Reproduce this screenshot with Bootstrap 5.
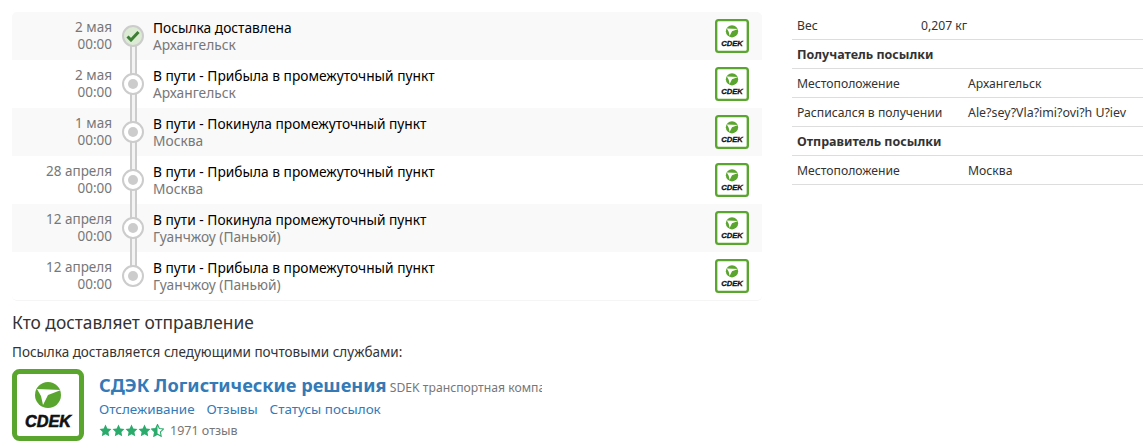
<!DOCTYPE html>
<html lang="ru"><head><meta charset="utf-8"><title>Трекинг</title>
<link href="https://cdn.jsdelivr.net/npm/bootstrap@5.3.0/dist/css/bootstrap.min.css" rel="stylesheet">
<style>
html,body{height:447px;overflow:hidden}
body{font-family:"Noto Sans","DejaVu Sans",sans-serif;font-size:12.5px;color:#333;background:#fff}
.page-wrap{padding:12px 0 0 12px;width:1143px}
.timeline{width:750px;border-radius:5px;overflow:hidden;flex:none;border-bottom:1px solid #f5f5f5}
.ev-row{height:48px;position:relative}
.ev-row:nth-child(odd){background:#f9f9f9}
.ev-date{width:100px;text-align:right;font-size:13.500px;line-height:17px;color:#777;padding-top:7px;flex:none}
.ev-mark{width:41px;flex:none;position:relative}
.ev-line{position:absolute;left:17.500px;top:0;bottom:0;width:7px;background:#f4f4f4;border-left:2px solid #ccc;border-right:2px solid #ccc}
.ev-row:first-child .ev-line{top:24px}
.ev-row:last-child .ev-line{bottom:24px}
.ev-dot{position:absolute;left:10px;top:13px;width:22px;height:22px;border-radius:50%;border:2px solid #ccc;background:#fff;display:flex;align-items:center;justify-content:center}
.ev-dot i{display:block;width:10px;height:10px;border-radius:50%;background:#ccc}
.ev-dot.done{background:#dcebd3}
.ev-text{flex:1;line-height:17px;padding-top:7px;font-size:13.750px}
.ev-title{color:#000}
.ev-place{color:#777}
.ev-logo{width:34px;height:34px;margin:7px 13px 0 0;flex:none}
.side{margin-left:30px;width:351px;flex:none}
.side-row{height:29px;border-bottom:1px solid #ddd;display:flex;align-items:center;padding:2px 0 0 5px;font-size:12.200px;color:#333}
.side-row:first-child{height:28px;padding-top:1px}
.side-k{width:171px;flex:none}
.side-k.short{width:124px}
.side-h{font-weight:700;font-size:12.500px}
.side-latin{font-size:12.400px}
.who{font-size:17.350px;line-height:20px;margin:11px 0 0;font-weight:400}
.who-p{font-size:13.500px;line-height:16px;margin:12px 0 0}
.svc{margin-top:9px}
.svc-logo{width:72px;height:72px;flex:none}
.svc-body{margin-left:15px;width:443px;white-space:nowrap;overflow:hidden;padding-top:5px}
.svc-title{font-size:18.200px;font-weight:700;color:#337ab7;line-height:22px;text-decoration:none}
.svc-desc{font-size:12.200px;color:#777}
.svc-links{font-size:13.450px;line-height:20px;margin-top:1px;gap:12px}
.svc-links a{color:#337ab7;text-decoration:none}
.svc-rate{font-size:12.500px;color:#777;margin-top:3px;line-height:18px}
.stars{width:65px;height:13px;margin-right:6px}
.logo-txt{font-family:"Liberation Sans",sans-serif;font-weight:700;font-style:italic}
</style></head><body>
<svg width="0" height="0" class="position-absolute"><defs>
<clipPath id="half"><rect x="0" y="0" width="12" height="24"/></clipPath>
<symbol id="cdek" viewBox="0 0 72 72">
<rect x="2.500" y="2.500" width="67" height="67" rx="5" fill="#fff" stroke="#5aa52e" stroke-width="5"/>
<circle cx="36" cy="26" r="13" fill="#5aa52e"/>
<path d="M25 20 L49 21 L36 26 L31 36 L29 27 Z" fill="#fff"/>
<text x="36" y="58" text-anchor="middle" class="logo-txt" font-size="17" textLength="46" lengthAdjust="spacingAndGlyphs" fill="#111" stroke="#111" stroke-width=".6">CDEK</text>
</symbol>
<symbol id="star" viewBox="0 0 24 24"><path d="M12 1l3.400 7.300 7.600 1-5.600 5.400 1.400 8L12 18.800l-6.800 3.900 1.400-8L1 9.300l7.600-1z"/></symbol>
<symbol id="star-half" viewBox="0 0 24 24"><path d="M12 1l3.400 7.300 7.600 1-5.600 5.400 1.400 8L12 18.800l-6.800 3.900 1.400-8L1 9.300l7.600-1z" fill="none" stroke="#2bab6b" stroke-width="2"/><path clip-path="url(#half)" d="M12 1l3.400 7.300 7.600 1-5.600 5.400 1.400 8L12 18.800l-6.800 3.900 1.400-8L1 9.300l7.600-1z" fill="#2bab6b"/></symbol>
</defs></svg>
<div class="page-wrap">
<div class="d-flex align-items-start">
<div class="timeline">
<div class="ev-row d-flex"><div class="ev-date">2 мая<br>00:00</div><div class="ev-mark"><div class="ev-line"></div><div class="ev-dot done"><svg width="14" height="12" viewBox="0 0 14 12"><path d="M1.500 6.500l3.500 3.500 7.500-8" fill="none" stroke="#3d7f35" stroke-width="3"/></svg></div></div><div class="ev-text"><div class="ev-title">Посылка доставлена</div><div class="ev-place">Архангельск</div></div><svg class="ev-logo"><use href="#cdek"/></svg></div>
<div class="ev-row d-flex"><div class="ev-date">2 мая<br>00:00</div><div class="ev-mark"><div class="ev-line"></div><div class="ev-dot"><i></i></div></div><div class="ev-text"><div class="ev-title">В пути - Прибыла в промежуточный пункт</div><div class="ev-place">Архангельск</div></div><svg class="ev-logo"><use href="#cdek"/></svg></div>
<div class="ev-row d-flex"><div class="ev-date">1 мая<br>00:00</div><div class="ev-mark"><div class="ev-line"></div><div class="ev-dot"><i></i></div></div><div class="ev-text"><div class="ev-title">В пути - Покинула промежуточный пункт</div><div class="ev-place">Москва</div></div><svg class="ev-logo"><use href="#cdek"/></svg></div>
<div class="ev-row d-flex"><div class="ev-date">28 апреля<br>00:00</div><div class="ev-mark"><div class="ev-line"></div><div class="ev-dot"><i></i></div></div><div class="ev-text"><div class="ev-title">В пути - Прибыла в промежуточный пункт</div><div class="ev-place">Москва</div></div><svg class="ev-logo"><use href="#cdek"/></svg></div>
<div class="ev-row d-flex"><div class="ev-date">12 апреля<br>00:00</div><div class="ev-mark"><div class="ev-line"></div><div class="ev-dot"><i></i></div></div><div class="ev-text"><div class="ev-title">В пути - Покинула промежуточный пункт</div><div class="ev-place">Гуанчжоу (Паньюй)</div></div><svg class="ev-logo"><use href="#cdek"/></svg></div>
<div class="ev-row d-flex"><div class="ev-date">12 апреля<br>00:00</div><div class="ev-mark"><div class="ev-line"></div><div class="ev-dot"><i></i></div></div><div class="ev-text"><div class="ev-title">В пути - Прибыла в промежуточный пункт</div><div class="ev-place">Гуанчжоу (Паньюй)</div></div><svg class="ev-logo"><use href="#cdek"/></svg></div>
</div>
<div class="side">
<div class="side-row"><div class="side-k short">Вес</div><div>0,207 кг</div></div>
<div class="side-row side-h">Получатель посылки</div>
<div class="side-row"><div class="side-k">Местоположение</div><div>Архангельск</div></div>
<div class="side-row"><div class="side-k">Расписался в получении</div><div class="side-latin">Ale?sey?Vla?imi?ovi?h U?iev</div></div>
<div class="side-row side-h">Отправитель посылки</div>
<div class="side-row"><div class="side-k">Местоположение</div><div>Москва</div></div>
</div>
</div>
<h2 class="who">Кто доставляет отправление</h2>
<p class="who-p">Посылка доставляется следующими почтовыми службами:</p>
<div class="svc d-flex">
<svg class="svc-logo"><use href="#cdek"/></svg>
<div class="svc-body">
<div><a class="svc-title" href="#">СДЭК Логистические решения</a> <span class="svc-desc">SDEK транспортная компания</span></div>
<div class="svc-links d-flex"><a href="#">Отслеживание</a><a href="#">Отзывы</a><a href="#">Статусы посылок</a></div>
<div class="svc-rate d-flex align-items-center"><svg class="stars" viewBox="0 0 65 13" fill="#2bab6b"><use href="#star" x="0" width="13" height="13"/><use href="#star" x="13" width="13" height="13"/><use href="#star" x="26" width="13" height="13"/><use href="#star" x="39" width="13" height="13"/><use href="#star-half" x="52" width="13" height="13"/></svg>1971 отзыв</div>
</div>
</div>
</div>
<script src="https://cdn.jsdelivr.net/npm/bootstrap@5.3.0/dist/js/bootstrap.bundle.min.js"></script>
</body></html>
